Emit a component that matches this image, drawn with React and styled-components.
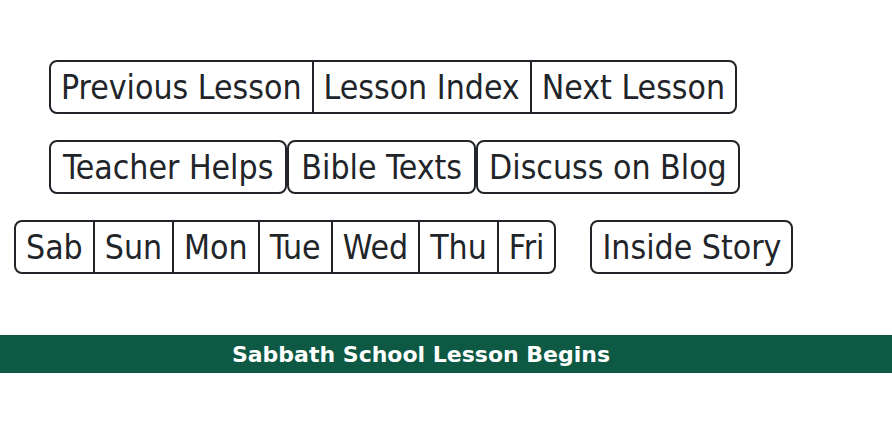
import React from "react";
import styled, { createGlobalStyle } from "styled-components";

const GlobalStyle = createGlobalStyle`
  body {
    margin: 0;
    background: #ffffff;
    font-family: "DejaVu Sans Condensed", "DejaVu Sans", sans-serif;
    color: #212529;
  }
`;

const Page = styled.div`
  width: 892px;
  height: 433px;
  padding-top: 60px;
  box-sizing: border-box;
`;

const Row = styled.div`
  display: flex;
  align-items: center;
  gap: ${(p) => p.gap || 0}px;
  padding-left: ${(p) => p.indent}px;
  margin-bottom: 26px;
`;

const Group = styled.div`
  display: flex;
  border: 2px solid #212529;
  border-radius: 8px;
  overflow: hidden;
`;

const GroupItem = styled.a`
  display: flex;
  align-items: center;
  height: 50px;
  padding: 0 10px;
  font-size: 33.5px;
  color: #212529;
  text-decoration: none;
  white-space: nowrap;
  & + & {
    border-left: 2px solid #212529;
  }
`;

const Button = styled.a`
  display: flex;
  align-items: center;
  height: 50px;
  padding: 0 ${(p) => p.pad || 10}px;
  font-size: 33.5px;
  color: #212529;
  text-decoration: none;
  white-space: nowrap;
  border: 2px solid #212529;
  border-radius: 8px;
`;

const Banner = styled.div`
  margin-top: 61px;
  height: 38px;
  background: #0d5943;
  color: #ffffff;
  font-family: "DejaVu Sans", sans-serif;
  font-weight: bold;
  font-size: 22px;
  display: flex;
  align-items: center;
  justify-content: center;
  padding-right: 50px;
`;

const days = ["Sab", "Sun", "Mon", "Tue", "Wed", "Thu", "Fri"];

export default function App() {
  return (
    <>
      <GlobalStyle />
      <Page>
        <Row indent={49}>
          <Group>
            <GroupItem>Previous Lesson</GroupItem>
            <GroupItem>Lesson Index</GroupItem>
            <GroupItem>Next Lesson</GroupItem>
          </Group>
        </Row>
        <Row indent={49}>
          <Button pad={12}>Teacher Helps</Button>
          <Button pad={12}>Bible Texts</Button>
          <Button pad={11}>Discuss on Blog</Button>
        </Row>
        <Row indent={14} gap={34}>
          <Group>
            {days.map((d) => (
              <GroupItem key={d}>{d}</GroupItem>
            ))}
          </Group>
          <Button>Inside Story</Button>
        </Row>
        <Banner>Sabbath School Lesson Begins</Banner>
      </Page>
    </>
  );
}
